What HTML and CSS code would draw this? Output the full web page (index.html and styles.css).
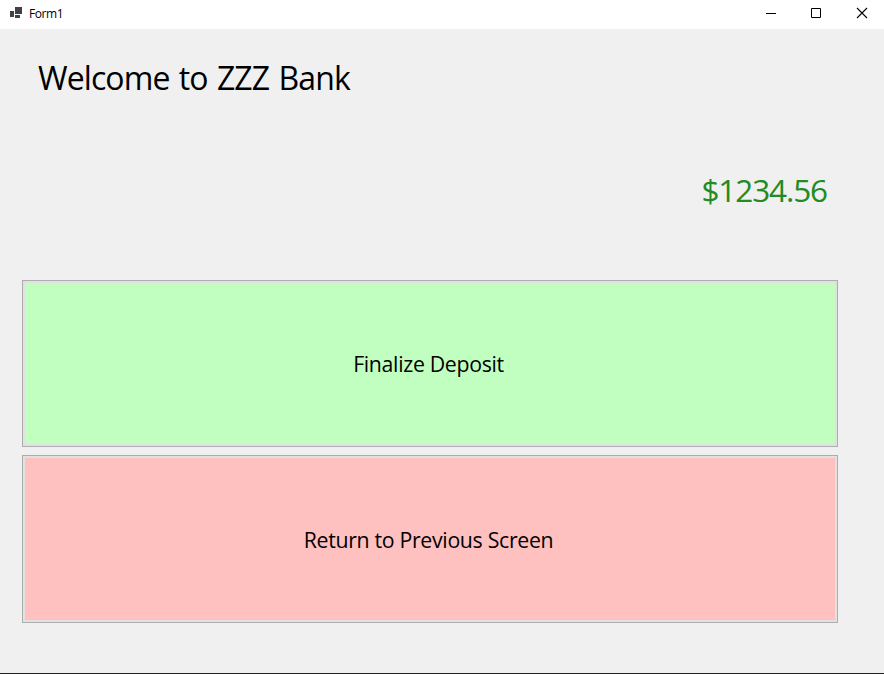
FILE: index.html
```html
<!DOCTYPE html>
<html lang="en">
<head>
<meta charset="utf-8">
<title>Form1</title>
<link rel="stylesheet" href="styles.css">
</head>
<body>
<div class="window">
  <header class="titlebar">
    <svg class="app-icon" width="14" height="14" viewBox="0 0 14 14" shape-rendering="crispEdges" fill="#424242"><path d="M6 1h7v7H6zM1 5h4v6H1zM6 9h5v3H6z"/></svg>
    <span class="title">Form1</span>
    <div class="controls">
      <svg class="control" width="46" height="28" viewBox="0 0 46 28"><path d="M18 13.500h10" stroke="#000"/></svg>
      <svg class="control" width="46" height="28" viewBox="0 0 46 28"><path d="M17.500 8.500h9v9h-9z" fill="none" stroke="#000"/></svg>
      <svg class="control" width="46" height="28" viewBox="0 0 46 28"><path d="M17 8l10 10M27 8l-10 10" stroke="#000" stroke-width="1.100"/></svg>
    </div>
  </header>
  <main class="form">
    <h1 class="welcome"><span>Welcome to ZZZ Bank</span></h1>
    <p class="balance"><span>$1234.56</span></p>
    <div class="actions">
      <button class="action deposit"><span>Finalize Deposit</span></button>
      <button class="action return"><span>Return to Previous Screen</span></button>
    </div>
  </main>
</div>
</body>
</html>
```
FILE: styles.css
```css
* { box-sizing: border-box; }
body {
  margin: 0;
  font-family: "Open Sans", "Noto Sans", sans-serif;
  color: #000;
}
.window {
  width: 884px;
  height: 674px;
  display: flex;
  flex-direction: column;
  background: #f0f0f0;
  border-bottom: 1px solid #222;
  overflow: hidden;
}
.titlebar {
  height: 29px;
  flex: none;
  display: flex;
  align-items: flex-start;
  padding-left: 9px;
  background: #fff;
}
.app-icon { margin-top: 6px; }
.title {
  margin: 5px 0 0 6px;
  font-size: 12px;
  line-height: 17px;
  letter-spacing: -0.4px;
}
.controls { display: flex; margin: 0 -2px 0 auto; }
.control { display: block; }
.form {
  flex: 1;
  display: flex;
  flex-direction: column;
  padding: 27px 46px 0 22px;
}
.welcome {
  margin: 0 0 0 16px;
  font-size: 32px;
  font-weight: 400;
  line-height: 44px;
  letter-spacing: -0.9px;
  word-spacing: 1.900px;
}
.balance {
  margin: 68px 11px 0 0;
  text-align: right;
  font-size: 31.500px;
  font-weight: 400;
  line-height: 44px;
  letter-spacing: -1.100px;
  color: #228b22;
}
.actions {
  display: grid;
  grid-template-rows: 167px 168px;
  gap: 8px;
  margin-top: 68px;
}
.action {
  padding: 0 3px 0 0;
  border: 1px solid #adadad;
  box-shadow: inset 0 0 0 2px #e1e1e1;
  font: 400 21.300px/30px "Open Sans", "Noto Sans", sans-serif;
  letter-spacing: -0.320px;
  color: #000;
}
.deposit { background: #c0ffc0; }
.return { background: #ffc0c0; padding-top: 2px; }
```
